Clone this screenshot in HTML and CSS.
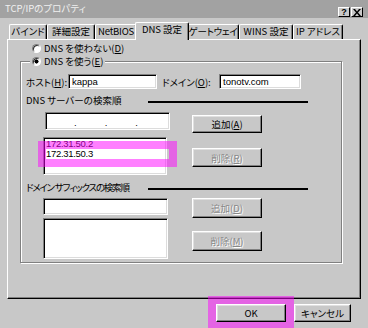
FILE: index.html
```html
<!DOCTYPE html>
<html lang="ja">
<head>
    <meta charset="UTF-8">
    <title>TCP/IPのプロパティ</title>
    <link rel="stylesheet" href="styles.css">
</head>
<body>
    <div class="window">
        <div class="titlebar">
            <span class="title">TCP/IPのプロパティ</span>
            <div class="caption-btns">
                <span class="cbtn help">?</span>
                <span class="cbtn close">
                    <svg width="8" height="7" viewBox="0 0 8 7"><path d="M0 0h2l2 2.5L6 0h2L5 3.5 8 7H6L4 4.5 2 7H0l3-3.5z" fill="#000"/></svg>
                </span>
            </div>
        </div>

        <div class="content">
            <div class="tabs">
                <div class="tab t-bind">バインド</div>
                <div class="tab t-adv">詳細設定</div>
                <div class="tab t-netbios">NetBIOS</div>
                <div class="tab t-dns active">DNS 設定</div>
                <div class="tab t-gw">ゲートウェイ</div>
                <div class="tab t-wins">WINS 設定</div>
                <div class="tab t-ip">IP アドレス</div>
            </div>

            <div class="panel">
                <div class="radio-row"><span class="radio"></span><span>DNS を使わない(<u>D</u>)</span></div>

                <fieldset class="group">
                    <legend><span class="radio checked"></span><span>DNS を使う(<u>E</u>)</span></legend>

                    <div class="host-row">
                        <span class="lbl-host">ホスト(<u>H</u>):</span>
                        <div class="field host-input">kappa</div>
                        <span class="lbl-domain">ドメイン(<u>O</u>):</span>
                        <div class="field domain-input">tonotv.com</div>
                    </div>

                    <div class="section-head">
                        <span>DNS サーバーの検索順</span>
                        <span class="rule"></span>
                    </div>
                    <div class="section">
                        <div class="col-left">
                            <div class="field ip-box"><span>.</span><span>.</span><span>.</span></div>
                            <div class="field list">
                                <div class="item">172.31.50.2</div>
                                <div class="item marked">172.31.50.3</div>
                            </div>
                        </div>
                        <div class="col-right">
                            <div class="btn add">追加(<u>A</u>)</div>
                            <div class="btn remove disabled">削除(<u>R</u>)</div>
                        </div>
                    </div>

                    <div class="section-head second">
                        <span class="tight">ドメイン サフィックスの検索順</span>
                        <span class="rule"></span>
                    </div>
                    <div class="section suffix">
                        <div class="col-left">
                            <div class="field suffix-input"></div>
                            <div class="field list tall"></div>
                        </div>
                        <div class="col-right">
                            <div class="btn add disabled">追加(<u>D</u>)</div>
                            <div class="btn remove disabled">削除(<u>M</u>)</div>
                        </div>
                    </div>
                </fieldset>
            </div>

            <div class="footer">
                <div class="btn ok">OK</div>
                <div class="btn cancel">キャンセル</div>
            </div>
        </div>
    </div>
</body>
</html>
```

FILE: styles.css
```css
* {
    box-sizing: border-box;
}
body {
    margin: 0;
    font-family: "Noto Sans CJK JP", sans-serif;
    font-size: 9.5px;
    font-feature-settings: "palt";
    color: #000;
}
.window {
    width: 368px;
    height: 328px;
    background: #c8c8c8;
    overflow: hidden;
}

/* title bar */
.titlebar {
    height: 18px;
    background: #a2a2a2;
    display: flex;
    justify-content: space-between;
    align-items: flex-start;
    padding: 0 5px;
}
.title {
    color: #f0f0f0;
    line-height: 10px;
    margin-top: 3px;
}
.caption-btns {
    display: flex;
    gap: 1px;
    margin-top: 7px;
}
.cbtn {
    width: 12px;
    height: 10px;
    background: #c8c8c8;
    border: 1px solid;
    border-color: #fff #000 #000 #fff;
    display: flex;
    align-items: center;
    justify-content: center;
    font-family: "Liberation Sans", sans-serif;
    font-weight: bold;
    font-size: 9px;
    line-height: 8px;
}

.content {
    padding: 4px 7px 0 7px;
}

/* tabs */
.tabs {
    display: flex;
    align-items: flex-end;
    height: 17px;
    padding-left: 2px;
}
.tab {
    height: 15px;
    border: 1px solid;
    border-color: #fff #000 transparent #fff;
    border-bottom: none;
    border-radius: 2px 2px 0 0;
    box-shadow: inset -1px 0 #808080;
    line-height: 13px;
    text-align: center;
    white-space: nowrap;
}
.t-bind { width: 38px; }
.t-adv { width: 48px; }
.t-netbios { width: 42px; letter-spacing: -0.2px; }
.t-dns { width: 54px; }
.t-gw { width: 52px; letter-spacing: -0.3px; }
.t-wins { width: 54px; }
.t-ip { width: 50px; }
.tab.active {
    height: 18px;
    margin: 0 -2px -1px;
    position: relative;
    z-index: 1;
    background: #c8c8c8;
}

/* tab page */
.panel {
    width: 354px;
    height: 260px;
    border: 1px solid;
    border-color: #fff #000 #000 #fff;
    box-shadow: inset -1px -1px #808080;
    padding: 2px 0 0 12px;
}
.radio-row {
    display: flex;
    align-items: center;
    gap: 3px;
    height: 12px;
    margin-left: 12px;
}
.radio {
    width: 9px;
    height: 9px;
    border-radius: 50%;
    border: 1px solid;
    border-color: #808080 #fff #fff #808080;
    background: #fff;
    box-shadow: inset 1px 1px #303030;
    flex-shrink: 0;
}
.radio.checked {
    background: radial-gradient(circle, #000 0 1.8px, #fff 2.3px);
}

.group {
    margin: 1px 0 0 0;
    width: 322px;
    padding: 0 0 3px 0;
    border: 1px solid #808080;
    box-shadow: inset 1px 1px #fff, 1px 1px #fff;
}
.group legend {
    display: flex;
    align-items: center;
    gap: 3px;
    margin-left: 9px;
    padding: 0 2px;
    line-height: 12px;
    background: #c8c8c8;
}

.field {
    background: #fff;
    border: 1px solid;
    border-color: #808080 #fff #fff #808080;
    box-shadow: inset 1px 1px #000, inset -1px -1px #dcdcdc;
    font-family: "Liberation Sans", sans-serif;
}

.host-row {
    display: flex;
    align-items: center;
    margin-top: 7px;
    padding-left: 5px;
}
.lbl-host {
    width: 42px;
}
.lbl-domain {
    width: 57px;
    margin-left: 5px;
}
.host-input,
.domain-input {
    height: 15px;
    line-height: 13px;
    padding-left: 3px;
}
.host-input {
    width: 89px;
}
.domain-input {
    width: 82px;
}

.section-head {
    display: flex;
    align-items: center;
    justify-content: space-between;
    width: 282px;
    height: 12px;
    margin: 5px 0 0 5px;
}
.section-head.second {
    margin-top: 6px;
}
.tight {
    letter-spacing: -1.2px;
}
.rule {
    width: 160px;
    height: 2px;
    margin-top: 4px;
    background: #000;
}

.section {
    display: flex;
    margin-top: 6px;
}
.section.suffix {
    margin-top: 5px;
}
.col-left {
    margin-left: 22px;
    width: 127px;
}
.col-right {
    margin-left: 22px;
    width: 70px;
}
.ip-box {
    margin-left: 2px;
    width: 125px;
    height: 18px;
    display: flex;
    align-items: flex-end;
    gap: 28px;
    padding: 0 0 1px 28px;
    line-height: 10px;
}
.list {
    margin-top: 7px;
    width: 124px;
    height: 38px;
    padding: 1px 0 0 2px;
}
.item {
    line-height: 10px;
    letter-spacing: -0.3px;
}
.item.marked {
    margin-right: -3px;
    outline: 8px solid rgba(255, 0, 255, 0.5);
}
.suffix-input {
    width: 125px;
    height: 17px;
}
.list.tall {
    margin-top: 3px;
    width: 125px;
    height: 41px;
}

/* buttons */
.btn {
    background: #c8c8c8;
    border: 1px solid;
    border-color: #fff #000 #000 #fff;
    box-shadow: inset -1px -1px #808080, inset 1px 1px #e0e0e0;
    display: flex;
    align-items: center;
    justify-content: center;
    width: 70px;
    height: 18px;
    white-space: nowrap;
}
.btn.disabled {
    color: #888;
    text-shadow: 1px 1px #fff;
}
.section .add {
    margin-top: 3px;
}
.section .remove {
    margin-top: 15px;
    height: 19px;
}
.suffix .add {
    margin-top: 0;
    height: 20px;
}
.suffix .remove {
    margin-top: 13px;
    height: 20px;
}

.footer {
    display: flex;
    justify-content: flex-end;
    gap: 8px;
    margin-top: 5px;
    padding-right: 10px;
}
.ok {
    outline: 8px solid rgba(255, 0, 255, 0.5);
}
.cancel {
    width: 57px;
}
```
